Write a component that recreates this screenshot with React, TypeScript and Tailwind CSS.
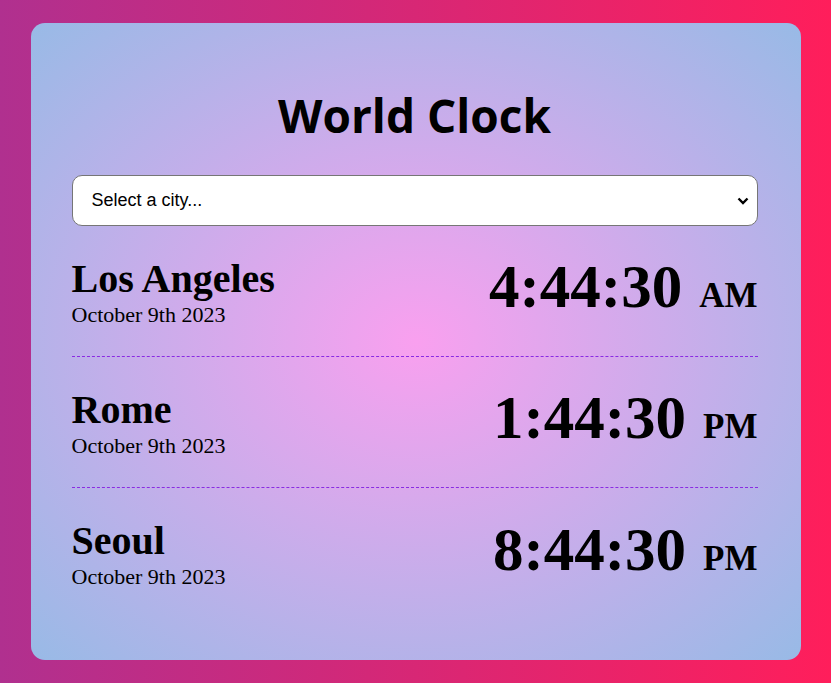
const cities = [
  { name: 'Los Angeles', date: 'October 9th 2023', time: '4:44:30', period: 'AM' },
  { name: 'Rome', date: 'October 9th 2023', time: '1:44:30', period: 'PM' },
  { name: 'Seoul', date: 'October 9th 2023', time: '8:44:30', period: 'PM' }
]

function CityRow({
  name,
  date,
  time,
  period,
  last
}: {
  name: string
  date: string
  time: string
  period: string
  last: boolean
}): React.JSX.Element {
  return (
    <div
      className={
        last
          ? 'flex h-[131px] items-center justify-between'
          : 'flex h-[131px] items-center justify-between border-b border-dashed border-[#8a2be2]'
      }
    >
      <div className="flex flex-col">
        <h2 className="text-[40px] font-bold leading-[46px]">{name}</h2>
        <span className="text-[22px] leading-[25px]">{date}</span>
      </div>
      <div className="flex items-baseline pb-[8px] text-[61px] font-bold leading-[66px]">
        <span>{time}</span>
        <span className="ml-[17px] text-[35px] leading-none">{period}</span>
      </div>
    </div>
  )
}

export default function App(): React.JSX.Element {
  return (
    <div className="flex min-h-screen items-center justify-center bg-[linear-gradient(to_right,#b0308f,#ff1e5b)] font-['Liberation_Serif',serif] text-black">
      <div className="w-[770px] rounded-[14px] bg-[radial-gradient(#f9a0ef,#98bae6)] pt-[41px] pr-[43px] pb-[41px] pl-[41px]">
        <h1 className="mt-[21px] mb-[30px] text-center font-['Open_Sans',sans-serif] text-[46px] font-bold leading-[60px]">
          World Clock
        </h1>
        <div className="relative">
          <select
            className="h-[51px] w-full appearance-none rounded-[10px] border border-[#767676] bg-white pl-[19px] font-['Liberation_Sans',sans-serif] text-[18px] text-black outline-none"
            defaultValue=""
          >
            <option value="">Select a city...</option>
            <option value="la">Los Angeles</option>
            <option value="rome">Rome</option>
            <option value="seoul">Seoul</option>
          </select>
          <svg
            className="pointer-events-none absolute top-1/2 right-[9px] -translate-y-1/2"
            width="12"
            height="8"
            viewBox="0 0 12 8"
            fill="none"
          >
            <path d="M1.5 1.5 L6 6 L10.5 1.5" stroke="black" strokeWidth="2.4" />
          </svg>
        </div>
        {cities.map((c, i) => (
          <CityRow key={c.name} {...c} last={i === cities.length - 1} />
        ))}
      </div>
    </div>
  )
}
